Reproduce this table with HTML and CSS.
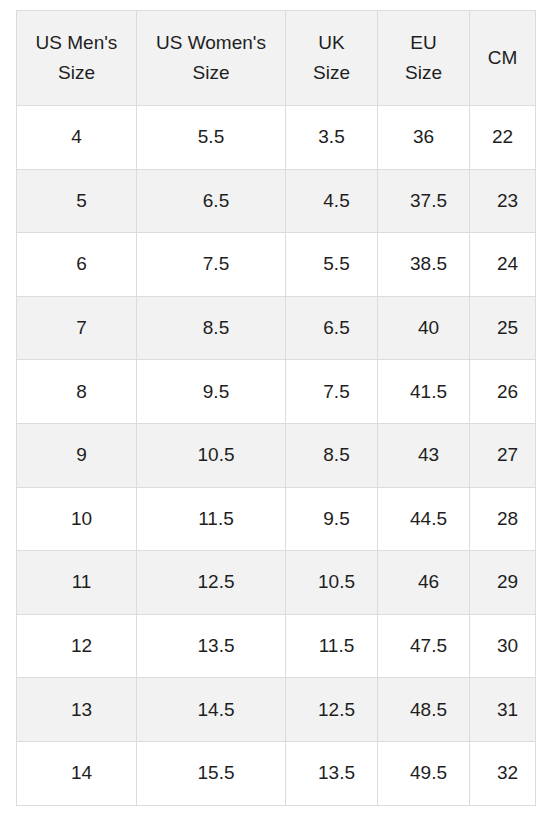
FILE: index.html
```html
<!DOCTYPE html>
<html>
<head>
<meta charset="utf-8">
<link rel="stylesheet" href="styles.css">
</head>
<body>
<div class="wrap">
<table class="sizes">
<colgroup>
<col class="c1"><col class="c2"><col class="c3"><col class="c4"><col class="c5">
</colgroup>
<thead>
<tr><th>US Men's<br>Size</th><th>US Women's<br>Size</th><th>UK<br>Size</th><th>EU<br>Size</th><th>CM</th></tr>
</thead>
<tbody>
<tr class="first"><td>4</td><td>5.5</td><td>3.5</td><td>36</td><td>22</td></tr>
<tr><td>5</td><td>6.5</td><td>4.5</td><td>37.5</td><td>23</td></tr>
<tr><td>6</td><td>7.5</td><td>5.5</td><td>38.5</td><td>24</td></tr>
<tr><td>7</td><td>8.5</td><td>6.5</td><td>40</td><td>25</td></tr>
<tr><td>8</td><td>9.5</td><td>7.5</td><td>41.5</td><td>26</td></tr>
<tr><td>9</td><td>10.5</td><td>8.5</td><td>43</td><td>27</td></tr>
<tr><td>10</td><td>11.5</td><td>9.5</td><td>44.5</td><td>28</td></tr>
<tr><td>11</td><td>12.5</td><td>10.5</td><td>46</td><td>29</td></tr>
<tr><td>12</td><td>13.5</td><td>11.5</td><td>47.5</td><td>30</td></tr>
<tr><td>13</td><td>14.5</td><td>12.5</td><td>48.5</td><td>31</td></tr>
<tr><td>14</td><td>15.5</td><td>13.5</td><td>49.5</td><td>32</td></tr>
</tbody>
</table>
</div>
</body>
</html>
```
FILE: styles.css
```css
html, body {
  margin: 0;
  padding: 0;
  background: #fff;
}
.wrap {
  padding: 10px 0 0 16px;
}
.sizes {
  border-collapse: collapse;
  table-layout: fixed;
  width: 519px;
  font-family: "Liberation Sans", Arial, sans-serif;
  font-size: 19px;
  line-height: 30px;
  color: #1e1e1e;
}
.c1 { width: 120px; }
.c2 { width: 149px; }
.c3 { width: 92px; }
.c4 { width: 92px; }
.c5 { width: 66px; }
.sizes th,
.sizes td {
  border: 1px solid #dcdcdc;
  text-align: center;
  font-weight: normal;
}
.sizes th {
  background: #f2f2f2;
  padding: 17px 0;
}
.sizes td {
  padding: 16.3px 0 16.3px 10px;
}
.sizes tr.first td {
  padding-left: 0;
}
.sizes tbody tr:nth-child(even) td {
  background: #f2f2f2;
}
```
